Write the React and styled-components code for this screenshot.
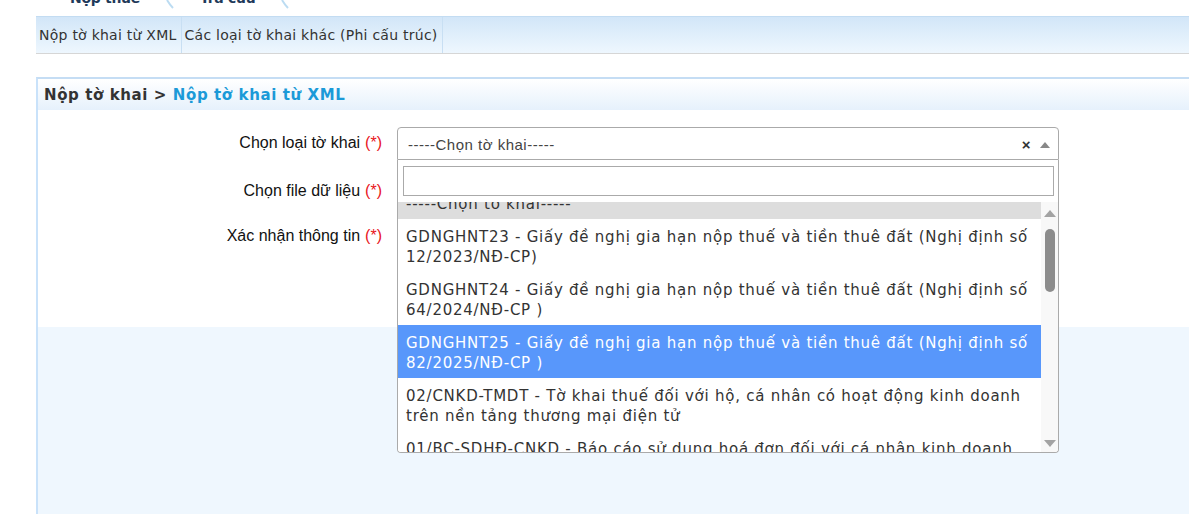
import React, { useLayoutEffect, useRef } from 'react';
import styled, { createGlobalStyle } from 'styled-components';

const GlobalStyle = createGlobalStyle`
  html, body { margin: 0; padding: 0; background: #fff; }
  body { font-family: "Liberation Sans", Arial, sans-serif; overflow: hidden; }
`;

const Page = styled.div`
  width: 1189px;
  height: 514px;
  overflow: hidden;
`;

const TabBar = styled.div`
  height: 16px;
  overflow: hidden;
  display: flex;
  align-items: flex-end;
  padding-left: 70px;
  gap: 26px;
`;

const Tab = styled.div`
  font-family: "DejaVu Sans", Tahoma, sans-serif;
  font-weight: bold;
  font-size: 14px;
  letter-spacing: -0.3px;
  line-height: 18px;
  color: #1f3a5a;
  margin-bottom: 9px;
  white-space: nowrap;
`;

const TabSep = styled.svg`
  width: 8px;
  height: 16px;
  flex: none;
  align-self: flex-start;
`;

const SubMenu = styled.div`
  margin-left: 36px;
  height: 36px;
  display: flex;
  background: linear-gradient(#d2e6f8, #eef7fe);
  border-top: 1px solid #c3dcf2;
  border-bottom: 1px solid #d6d6d6;
`;

const SubItem = styled.div`
  display: flex;
  align-items: center;
  padding: 0 4px 0 3px;
  font-family: "DejaVu Sans", Tahoma, sans-serif;
  font-size: 14px;
  letter-spacing: 0.25px;
  color: #333;
  border-right: 1px solid #c8dff3;
  white-space: nowrap;
`;

const Panel = styled.div`
  margin: 23px 0 0 36px;
  height: 437px;
  background: #eff7fe;
  border-left: 2px solid #c9e2fa;
  border-top: 2px solid #c5ddf4;
`;

const PanelHeader = styled.div`
  height: 31px;
  display: flex;
  align-items: center;
  padding-left: 6px;
  background: linear-gradient(#ffffff, #e6f1fc);
  font-family: "DejaVu Sans", Tahoma, sans-serif;
  font-weight: bold;
  font-size: 15px;
  letter-spacing: 0.6px;
  color: #333;
  white-space: nowrap;
`;

const Crumb = styled.span`
  color: #1b9ad8;
`;

const FormBody = styled.div`
  height: 200px;
  padding-top: 17px;
  background: #fff;
`;

const FormGrid = styled.div`
  display: grid;
  grid-template-columns: 344px 662px;
  grid-auto-rows: 33px;
  column-gap: 15px;
  row-gap: 14px;
`;

const Label = styled.div`
  display: flex;
  align-items: center;
  justify-content: flex-end;
  font-size: 16px;
  color: #111;
  padding-bottom: ${p => p.$lift || 0}px;
  white-space: nowrap;
`;

const Req = styled.span`
  color: #e8141b;
  margin-left: 5px;
`;

const Field = styled.div`
  position: relative;
`;

const Select = styled.div`
  box-sizing: border-box;
  height: 33px;
  display: flex;
  align-items: center;
  padding: 2px 8px 0 10px;
  background: #fff;
  border: 1px solid #aaa;
  border-radius: 4px 4px 0 0;
  font-size: 15px;
  letter-spacing: 0.5px;
  color: #444;
`;

const SelectText = styled.span`
  flex: 1;
  white-space: nowrap;
`;

const Clear = styled.span`
  font-weight: bold;
  font-size: 15px;
  color: #333;
  margin-right: 9px;
`;

const Caret = styled.span`
  width: 0;
  height: 0;
  border-left: 5px solid transparent;
  border-right: 5px solid transparent;
  border-bottom: 6px solid #888;
`;

const Dropdown = styled.div`
  position: absolute;
  top: 100%;
  left: 0;
  right: 0;
  height: 292px;
  display: flex;
  flex-direction: column;
  background: #fff;
  border: 1px solid #aaa;
  border-top: none;
  border-radius: 0 0 4px 4px;
  overflow: hidden;
  z-index: 5;
`;

const Search = styled.input`
  margin: 6px 4px 6px 5px;
  height: 28px;
  border: 1px solid #aaa;
  outline: none;
  padding: 0 4px;
  flex: none;
`;

const Results = styled.div`
  flex: 1;
  display: flex;
  min-height: 0;
`;

const List = styled.div`
  flex: 1;
  overflow: hidden;
`;

const Option = styled.div`
  padding: 8px 8px 5px;
  font-family: "DejaVu Sans", Tahoma, sans-serif;
  font-size: 15px;
  letter-spacing: 0.75px;
  line-height: 20px;
  color: ${p => (p.$active ? '#fff' : '#333')};
  background: ${p => (p.$active ? '#5897fb' : p.$selected ? '#ddd' : '#fff')};
`;

const Line = styled.div`
  white-space: nowrap;
`;

const ScrollBar = styled.div`
  width: 17px;
  flex: none;
  display: flex;
  flex-direction: column;
  align-items: center;
  background: #f8f8f8;
`;

const Arrow = styled.div`
  height: 17px;
  flex: none;
  display: flex;
  align-items: center;
  justify-content: center;
  margin-top: ${p => (p.$down ? 0 : 3)}px;
  &::after {
    content: '';
    border-left: 6px solid transparent;
    border-right: 6px solid transparent;
    ${p => (p.$down ? 'border-top' : 'border-bottom')}: 7px solid #a3a3a3;
  }
`;

const Track = styled.div`
  flex: 1;
  width: 100%;
  display: flex;
  justify-content: center;
`;

const Thumb = styled.div`
  width: 10px;
  height: 63px;
  border-radius: 5px;
  background: #8c8c8c;
`;

const options = [
  { lines: ['-----Chọn tờ khai-----'], selected: true },
  { lines: ['GDNGHNT23 - Giấy đề nghị gia hạn nộp thuế và tiền thuê đất (Nghị định số', '12/2023/NĐ-CP)'] },
  { lines: ['GDNGHNT24 - Giấy đề nghị gia hạn nộp thuế và tiền thuê đất (Nghị định số', '64/2024/NĐ-CP )'] },
  { lines: ['GDNGHNT25 - Giấy đề nghị gia hạn nộp thuế và tiền thuê đất (Nghị định số', '82/2025/NĐ-CP )'], active: true },
  { lines: ['02/CNKD-TMDT - Tờ khai thuế đối với hộ, cá nhân có hoạt động kinh doanh', 'trên nền tảng thương mại điện tử'] },
  { lines: ['01/BC-SDHĐ-CNKD - Báo cáo sử dụng hoá đơn đối với cá nhân kinh doanh', ''] },
];

const Separator = () => (
  <TabSep viewBox="0 0 8 16">
    <path d="M1 0 Q4 5 7 8" stroke="#bcdcf2" strokeWidth="2" fill="none" />
  </TabSep>
);

export default function App() {
  const listRef = useRef(null);
  useLayoutEffect(() => {
    if (listRef.current) listRef.current.scrollTop = 16;
  }, []);

  return (
    <Page>
      <GlobalStyle />
      <TabBar>
        <Tab>Nộp thuế</Tab>
        <Separator />
        <Tab>Tra cứu</Tab>
        <Separator />
      </TabBar>
      <SubMenu>
        <SubItem>Nộp tờ khai từ XML</SubItem>
        <SubItem>Các loại tờ khai khác (Phi cấu trúc)</SubItem>
      </SubMenu>
      <Panel>
        <PanelHeader>
          Nộp tờ khai &gt;&nbsp;<Crumb>Nộp tờ khai từ XML</Crumb>
        </PanelHeader>
        <FormBody>
          <FormGrid>
            <Label $lift={2}>Chọn loại tờ khai<Req>(*)</Req></Label>
            <Field>
              <Select>
                <SelectText>-----Chọn tờ khai-----</SelectText>
                <Clear>×</Clear>
                <Caret />
              </Select>
              <Dropdown>
                <Search type="text" />
                <Results>
                  <List ref={listRef}>
                    {options.map((o, i) => (
                      <Option key={i} $selected={o.selected} $active={o.active}>
                        {o.lines.map((l, j) => (
                          <Line key={j}>{l || '\u00a0'}</Line>
                        ))}
                      </Option>
                    ))}
                  </List>
                  <ScrollBar>
                    <Arrow />
                    <Track>
                      <Thumb style={{ marginTop: 7 }} />
                    </Track>
                    <Arrow $down />
                  </ScrollBar>
                </Results>
              </Dropdown>
            </Field>
            <Label>Chọn file dữ liệu<Req>(*)</Req></Label>
            <Field />
            <Label $lift={4}>Xác nhận thông tin<Req>(*)</Req></Label>
            <Field />
          </FormGrid>
        </FormBody>
      </Panel>
    </Page>
  );
}
